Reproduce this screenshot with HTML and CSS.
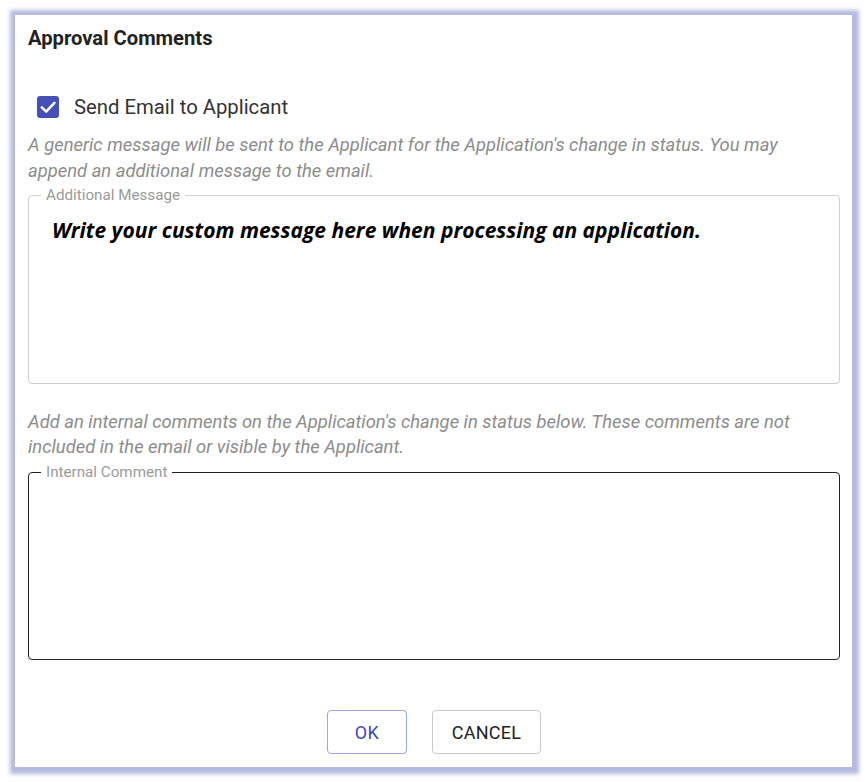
FILE: index.html
```html
<!DOCTYPE html>
<html lang="en">
<head>
<meta charset="utf-8">
<title>Approval Comments</title>
<link rel="stylesheet" href="styles.css">
</head>
<body>
<div class="dialog">
  <h2 class="title">Approval Comments</h2>
  <label class="check-row">
    <span class="checkbox">
      <svg viewBox="0 0 22 22" width="22" height="22"><path d="M4.8 11.4 L9.2 15.6 L17.4 6.9" fill="none" stroke="#fff" stroke-width="2.5" stroke-linecap="round" stroke-linejoin="round"/></svg>
    </span>
    <span class="check-label">Send Email to Applicant</span>
  </label>
  <p class="helper first">A generic message will be sent to the Applicant for the Application's change in status. You may append an additional message to the email.</p>
  <fieldset class="field light">
    <legend>Additional Message</legend>
    <div class="field-body one"><span class="custom">Write your custom message here when processing an application.</span></div>
  </fieldset>
  <p class="helper second">Add an internal comments on the Application's change in status below. These comments are not included in the email or visible by the Applicant.</p>
  <fieldset class="field dark">
    <legend>Internal Comment</legend>
    <div class="field-body two"></div>
  </fieldset>
  <div class="actions">
    <button class="btn ok">OK</button>
    <button class="btn cancel">CANCEL</button>
  </div>
</div>
</body>
</html>
```

FILE: styles.css
```css
html, body {
  margin: 0;
  padding: 0;
  background: #ffffff;
}
body {
  padding: 15px;
  font-family: Roboto, "Liberation Sans", sans-serif;
}
.dialog {
  box-sizing: border-box;
  width: 837px;
  height: 752px;
  background: #fff;
  padding: 10px 12px 0 13px;
  box-shadow: 1px 1px 4px 6px #b5badf;
  display: flex;
  flex-direction: column;
}
.title {
  margin: 0;
  font-size: 20.2px;
  line-height: 26px;
  font-weight: 700;
  color: #222;
}
.check-row {
  display: flex;
  align-items: center;
  height: 40px;
  margin-top: 36px;
  padding-left: 9px;
}
.checkbox {
  width: 22px;
  height: 22px;
  border-radius: 3px;
  background: #4750b7;
  display: flex;
}
.check-label {
  margin-left: 15px;
  font-size: 20.3px;
  color: #333;
}
.helper {
  margin: 0;
  font-size: 18.4px;
  line-height: 26px;
  font-style: italic;
  color: #8c8c8c;
}
.helper.first { margin-top: 5px; }
.helper.second { margin-top: 25px; line-height: 25px; }
.field {
  margin: 3px 0 0 0;
  padding: 0;
  width: 812px;
  box-sizing: border-box;
  border-radius: 4px;
  min-width: 0;
}
.field.light { border: 1px solid #cfcfcf; }
.field.dark { border: 1px solid #222; margin-top: 5px; }
.field legend {
  margin-left: 12px;
  padding: 0 5px;
  font-size: 15.2px;
  line-height: 16px;
  color: #9a9a9a;
}
.field-body.one {
  height: 180px;
  box-sizing: border-box;
  padding: 13px 0 0 23px;
}
.field-body.two { height: 179px; }
.custom {
  font-family: "Open Sans", Lato, sans-serif;
  font-style: italic;
  font-weight: 700;
  font-size: 21px;
  line-height: 28px;
  color: #000;
}
.actions {
  display: flex;
  justify-content: center;
  gap: 25px;
  margin-top: 50px;
}
.btn {
  height: 44px;
  padding: 0;
  border-radius: 4px;
  background: #fff;
  font-family: Roboto, "Liberation Sans", sans-serif;
  font-size: 18px;
  font-weight: 400;
  letter-spacing: 0.3px;
  cursor: pointer;
}
.btn.ok {
  width: 80px;
  border: 1px solid #9ea5e3;
  color: #3f4ab1;
}
.btn.cancel {
  width: 109px;
  border: 1px solid #c8c8c8;
  color: #222;
}
```
